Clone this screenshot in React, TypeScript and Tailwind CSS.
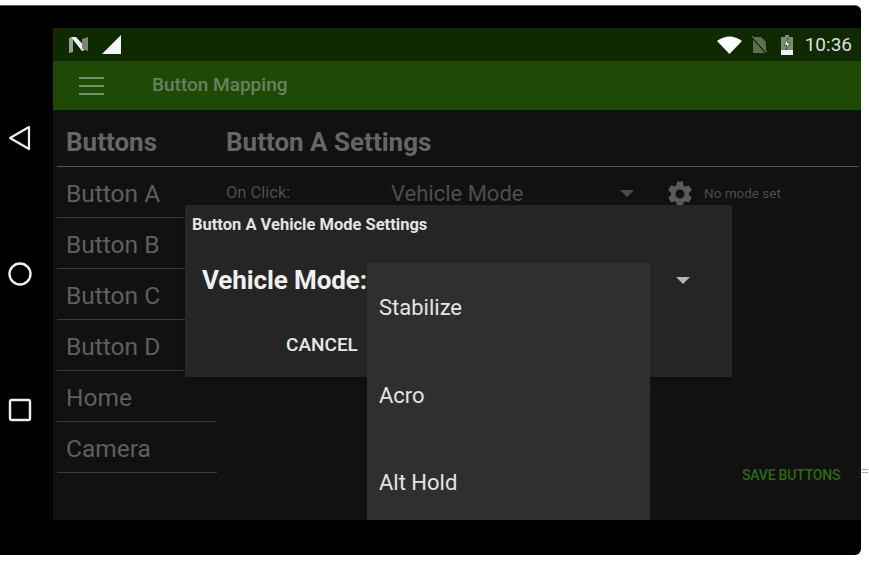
export default function App() {
  const rows = ["Button A", "Button B", "Button C", "Button D", "Home", "Camera"];
  return (
    <div className="w-[869px] h-[562px] bg-white pt-[5px] font-['Roboto',sans-serif] overflow-hidden relative">
      <div className="w-[861px] h-[550px] bg-black rounded-r-[6px] flex border-t border-[#555]">
        <div className="w-[53px] flex flex-col items-start pl-[8px] pt-[119px] gap-[111px] shrink-0">
          <svg width="23" height="26" viewBox="0 0 23 26" fill="none" stroke="#eee" strokeWidth="2.2" strokeLinejoin="round">
            <path d="M21 2 L2 13 L21 24 Z" />
          </svg>
          <svg width="24" height="24" viewBox="0 0 24 24" fill="none" stroke="#eee" strokeWidth="2.4">
            <circle cx="12" cy="12" r="10.5" />
          </svg>
          <svg width="24" height="24" viewBox="0 0 24 24" fill="none" stroke="#eee" strokeWidth="2.4" className="mt-[1px]">
            <rect x="2" y="2" width="20" height="20" rx="1.5" />
          </svg>
        </div>
        <div className="relative mt-[22px] w-[808px] h-[492px] flex flex-col bg-[#111111]">
          <div className="h-[33px] bg-[#0f2a00] flex items-center pl-[15px] pr-[9px] shrink-0">
            <svg width="21" height="18" viewBox="0 0 21 18" className="mr-[13px]">
              <path d="M1 2 L5 1 L5 16 L1 17 Z" fill="#9a9f98" />
              <path d="M3 1 L8 1 L19 13 L14 15 Z" fill="#f2f2f2" />
              <path d="M14 3 L20 1 L20 15 L14 13 Z" fill="#7d8578" />
            </svg>
            <svg width="20" height="19" viewBox="0 0 20 19">
              <path d="M19 0 V19 H0 Z" fill="#f4f4f4" />
            </svg>
            <div className="flex-1" />
            <svg width="25" height="18" viewBox="0 0 25 18" className="mr-[9px]">
              <path d="M0 5 Q12.5 -4 25 5 L12.5 18 Z" fill="#fff" />
            </svg>
            <svg width="16" height="18" viewBox="0 0 16 18" className="mr-[14px]">
              <path d="M2 1 H10 L15 6 V17 H2 Z" fill="#5d6f52" />
              <path d="M0 0 L16 18" stroke="#0f2a00" strokeWidth="1.6" />
              <path d="M1 0 L16 16" stroke="#7f8a78" strokeWidth="1" />
            </svg>
            <svg width="12" height="20" viewBox="0 0 12 20" className="mr-[12px]">
              <path d="M4 0 H8 V2 H12 V16 H0 V2 H4 Z" fill="#7d8a76" />
              <rect x="0" y="15" width="12" height="5" fill="#f4f4f4" />
              <path d="M7 3 L3 10 H6 L5 15 L9 8 H6.5 Z" fill="#fff" stroke="#0f2a00" strokeWidth="0.6" />
            </svg>
            <span className="text-[19px] leading-none text-[#dedede]">10:36</span>
          </div>
          <div className="h-[49px] bg-[#1f4a05] flex items-center pl-[26px] shrink-0">
            <div className="w-[25px] flex flex-col gap-[6px] mr-[48px]">
              <div className="h-[2px] bg-[#75906a]" />
              <div className="h-[2px] bg-[#75906a]" />
              <div className="h-[2px] bg-[#75906a]" />
            </div>
            <span className="text-[19px] font-medium text-[#6a8060]">Button Mapping</span>
          </div>
          <div className="ml-[4px] mr-[2px] h-[57px] border-b border-[#555555] flex items-center pl-[9px] pt-[8px] shrink-0">
            <span className="w-[160px] text-[26px] font-bold text-[#666666]">Buttons</span>
            <span className="text-[26px] font-bold text-[#666666]">Button A Settings</span>
          </div>
          <div className="flex flex-1 min-h-0">
            <div className="ml-[4px] w-[160px] shrink-0">
              {rows.map((r) => (
                <div key={r} className="h-[51px] border-b border-[#3a3a3a] pl-[9px] pt-[5px] flex items-center text-[24.5px] text-[#5f5f5f]">
                  {r}
                </div>
              ))}
            </div>
            <div className="flex-1 relative">
              <div className="flex items-center h-[53px] pl-[9px]">
                <span className="w-[165px] text-[16.5px] text-[#4d4d4d]">On Click:</span>
                <span className="w-[229px] text-[22px] text-[#4d4d4d]">Vehicle Mode</span>
                <svg width="14" height="7" viewBox="0 0 14 7" className="mr-[31px]"><path d="M0 0 H14 L7 7 Z" fill="#4a4a4a" /></svg>
                <svg width="30" height="30" viewBox="0 0 24 24" fill="#5a5a5a" className="mr-[9px]">
                  <path d="M19.14 12.94c.04-.3.06-.61.06-.94s-.02-.64-.07-.94l2.03-1.58a.49.49 0 0 0 .12-.61l-1.92-3.32a.49.49 0 0 0-.59-.22l-2.39.96a7 7 0 0 0-1.62-.94l-.36-2.54A.48.48 0 0 0 13.92 2h-3.84a.47.47 0 0 0-.47.41l-.36 2.54a7.4 7.4 0 0 0-1.62.94l-2.39-.96a.48.48 0 0 0-.59.22L2.74 8.87a.47.47 0 0 0 .12.61l2.03 1.58c-.05.3-.09.63-.09.94s.02.64.07.94l-2.03 1.58a.49.49 0 0 0-.12.61l1.92 3.32c.12.22.37.29.59.22l2.39-.96c.5.38 1.03.7 1.62.94l.36 2.54c.05.24.24.41.48.41h3.84c.24 0 .44-.17.47-.41l.36-2.54a7 7 0 0 0 1.62-.94l2.39.96c.22.08.47 0 .59-.22l1.92-3.32a.47.47 0 0 0-.12-.61zM12 15.6a3.6 3.6 0 1 1 0-7.2 3.6 3.6 0 0 1 0 7.2z" />
                </svg>
                <span className="text-[13.5px] text-[#4d4d4d]">No mode set</span>
              </div>
              <span className="absolute left-[525px] top-[298px] text-[14px] tracking-[-0.2px] font-medium text-[#2f6a10] whitespace-nowrap">SAVE BUTTONS</span>
            </div>
          </div>

          <div className="absolute left-[132px] top-[177px] w-[547px] h-[172px] bg-[#252525] shadow-md">
            <div className="pl-[7px] pt-[10px] text-[16.5px] leading-[20px] font-bold text-[#e4e4e4]">Button A Vehicle Mode Settings</div>
            <div className="pl-[17px] pt-[30px] flex items-center">
              <span className="text-[26px] leading-[30px] font-bold tracking-[-0.1px] text-[#f0f0f0]">Vehicle Mode:</span>
              <svg width="14" height="7" viewBox="0 0 14 7" className="ml-[309px]"><path d="M0 0 H14 L7 7 Z" fill="#b5b5b5" /></svg>
            </div>
            <div className="pl-[101px] pt-[38px] text-[19px] leading-[24px] font-medium text-[#e8e8e8]">CANCEL</div>
          </div>

          <div className="absolute left-[314px] top-[235px] w-[283px] h-[257px] bg-[#2f2f2f] flex flex-col pl-[12px] pt-[31px] gap-[59.5px] text-[22px] leading-[28px] text-[#e4e4e4] rounded-t-[2px]">
            <span>Stabilize</span>
            <span>Acro</span>
            <span>Alt Hold</span>
          </div>
        </div>
      </div>
      <div className="absolute left-[862px] top-[469px] w-[6px] flex flex-col gap-[2px]">
        <div className="h-px bg-[#aaaaaa]" />
        <div className="h-px bg-[#aaaaaa]" />
      </div>
    </div>
  );
}
